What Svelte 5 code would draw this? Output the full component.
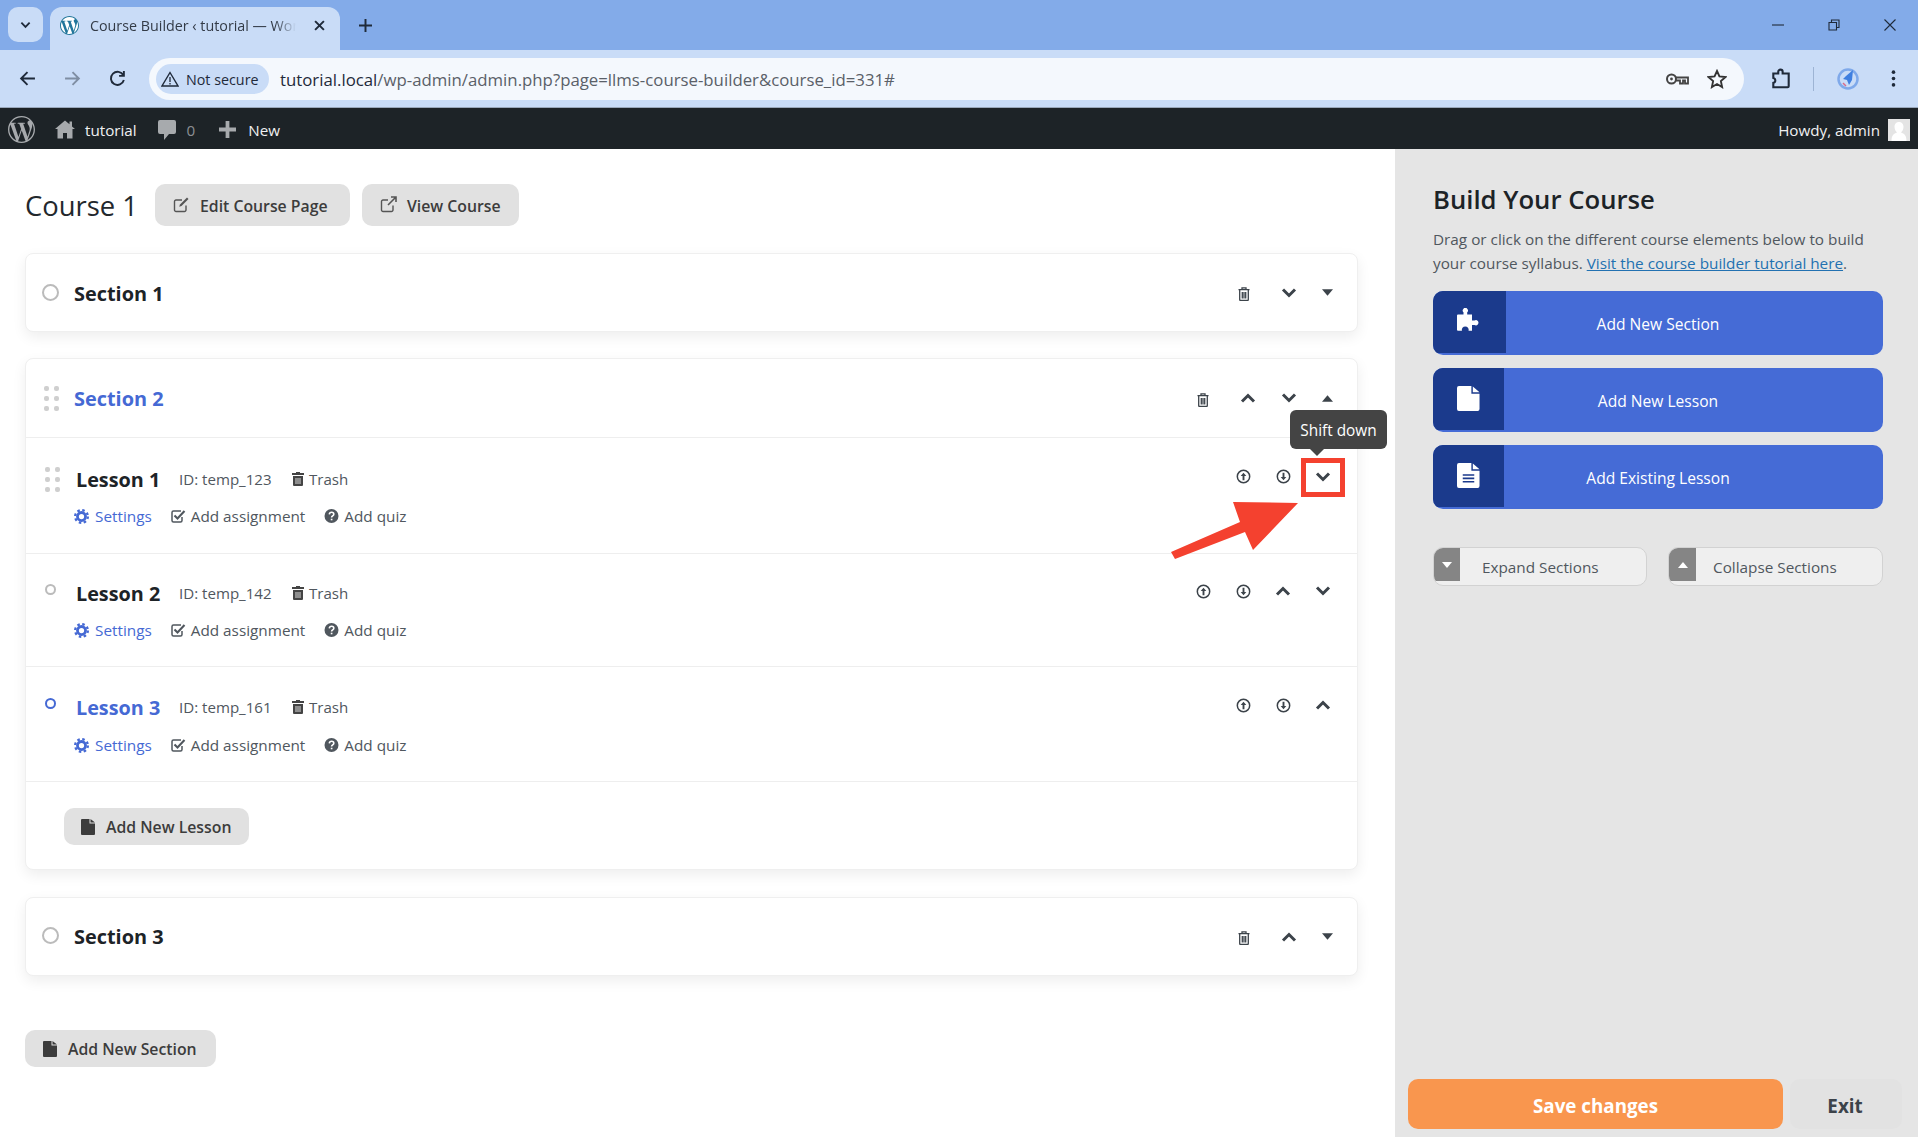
<script>
  const lessons = [
    { cls: 'l1', name: 'Lesson 1', id: 'temp_123', mark: 'drag', icons: ['cup', 'cdown', 'down'] },
    { cls: 'l2', name: 'Lesson 2', id: 'temp_142', mark: 'dot', icons: ['cup', 'cdown', 'up', 'down'] },
    { cls: 'l3', name: 'Lesson 3', id: 'temp_161', mark: 'blue', icons: ['cup', 'cdown', 'up'], active: true }
  ];
  const wp = 'M21.469 6.825c.84 1.537 1.318 3.3 1.318 5.175 0 3.979-2.156 7.456-5.363 9.325l3.295-9.527c.615-1.54.82-2.771.82-3.864 0-.405-.026-.78-.07-1.11m-7.981.105c.647-.03 1.232-.105 1.232-.105.582-.075.514-.93-.067-.899 0 0-1.755.135-2.88.135-1.064 0-2.85-.15-2.85-.15-.585-.03-.661.855-.075.885 0 0 .54.061 1.125.09l1.68 4.605-2.37 7.08L5.354 6.9c.649-.03 1.234-.1 1.234-.1.585-.075.516-.93-.065-.896 0 0-1.746.138-2.874.138-.2 0-.438-.008-.69-.015C4.911 3.15 8.235 1.215 12 1.215c2.809 0 5.365 1.072 7.286 2.833-.046-.003-.091-.009-.141-.009-1.06 0-1.812.923-1.812 1.914 0 .89.513 1.643 1.06 2.531.411.72.89 1.643.89 2.977 0 .915-.354 1.994-.821 3.479l-1.075 3.585-3.9-11.61.001.014zM12 22.784c-1.059 0-2.081-.153-3.048-.437l3.237-9.406 3.315 9.087c.024.053.05.101.078.149-1.12.393-2.325.609-3.582.609M1.211 12c0-1.564.336-3.05.935-4.39L7.29 21.709C3.694 19.96 1.212 16.271 1.211 12M12 0C5.385 0 0 5.385 0 12s5.385 12 12 12 12-5.385 12-12S18.615 0 12 0';
</script>

{#snippet chev(dir)}
  <svg class="chev" viewBox="0 0 16 10"><path d={dir === 'up' ? 'M2 8.5 8 2.5l6 6' : 'M2 1.5l6 6 6-6'} fill="none" stroke="#3c434a" stroke-width="3"/></svg>
{/snippet}
{#snippet caret(dir)}
  <svg class="caret" viewBox="0 0 10 6"><path d={dir === 'up' ? 'M0 6 5 0l5 6z' : 'M0 0l5 6 5-6z'} fill="#3c434a"/></svg>
{/snippet}
{#snippet trash()}
  <svg class="trash" viewBox="0 0 12 14"><path d="M4 2V.9h4V2M.5 2.6h11M1.7 3v9.6q0 .9.9.9h6.800q.9 0 .9-.9V3M4.300 5v6.500M6 5v6.500M7.700 5v6.500" fill="none" stroke="#3c434a" stroke-width="1.300"/></svg>
{/snippet}
{#snippet circ(dir)}
  <svg class="circ" viewBox="0 0 16 16"><circle cx="8" cy="8" r="6.600" fill="none" stroke="#3c434a" stroke-width="1.600"/><path d={dir === 'up' ? 'M8 4 5 7.500h2V12h2V7.500h2z' : 'M8 12 5 8.500h2V4h2v4.500h2z'} fill="#3c434a"/></svg>
{/snippet}
{#snippet file()}
  <svg class="file" viewBox="0 0 14 16"><path d="M1 0h7.500v4.500H14V15a1 1 0 0 1-1 1H1a1 1 0 0 1-1-1V1a1 1 0 0 1 1-1zM9.500 0 14 3.500H9.500z" fill="#3c3c3c"/></svg>
{/snippet}
{#snippet icon(n)}
  {#if n === 'cup'}{@render circ('up')}{:else if n === 'cdown'}{@render circ('down')}{:else}{@render chev(n)}{/if}
{/snippet}
{#snippet drag()}
  <span class="dots"><i></i><i></i><i></i><i></i><i></i><i></i></span>
{/snippet}

<div class="page">
  <div class="tabbar">
    <span class="tabmenu"><svg viewBox="0 0 12 8" width="11" height="8"><path d="M1.500 1.500 6 6l4.500-4.500" fill="none" stroke="#1f2a3a" stroke-width="2"/></svg></span>
    <div class="tab">
      <svg class="favicon" viewBox="0 0 24 24"><circle cx="12" cy="12" r="12" fill="#fff"/><path d={wp} fill="#21759b"/></svg>
      <span class="tabtitle">Course Builder ‹ tutorial — WordPress</span>
      <svg class="tabx" viewBox="0 0 10 10"><path d="M1 1l8 8M9 1 1 9" stroke="#1f2a3a" stroke-width="1.800"/></svg>
    </div>
    <svg class="newtab" viewBox="0 0 12 12"><path d="M6 0v12M0 6h12" stroke="#1f2a3a" stroke-width="1.800"/></svg>
    <div class="winctl">
      <svg viewBox="0 0 12 12"><path d="M0 6h12" stroke="#1f2a3a" stroke-width="1.100"/></svg>
      <svg viewBox="0 0 12 12"><path d="M1 3.500h7.500V11H1zM3.500 3.500V1H11v7.500H8.500" fill="none" stroke="#1f2a3a" stroke-width="1.100"/></svg>
      <svg viewBox="0 0 12 12"><path d="M.5.500l11 11M11.500.500l-11 11" stroke="#1f2a3a" stroke-width="1.100"/></svg>
    </div>
  </div>

  <div class="toolbar">
    <svg class="navi first" viewBox="0 0 16 16"><path d="M15 8H2M8 2 2 8l6 6" fill="none" stroke="#1f2a3a" stroke-width="1.800"/></svg>
    <svg class="navi" viewBox="0 0 16 16"><path d="M1 8h13M8 2l6 6-6 6" fill="none" stroke="#7f8ea3" stroke-width="1.800"/></svg>
    <svg class="navi" viewBox="0 0 16 16"><path d="M13.500 5A6.200 6.200 0 1 0 14 9.500M14 1v4.500H9.500" fill="none" stroke="#1f2a3a" stroke-width="1.800"/></svg>
    <div class="omni">
      <span class="chip">
        <svg viewBox="0 0 18 16" width="18" height="16"><path d="M9 1.500 17 15H1z" fill="none" stroke="#1f2a3a" stroke-width="1.400"/><path d="M9 6v5M9 12v1.500" stroke="#1f2a3a" stroke-width="1.300"/></svg>
        Not secure
      </span>
      <span class="url"><b>tutorial.local</b>/wp-admin/admin.php?page=llms-course-builder&amp;course_id=331#</span>
      <svg class="key" viewBox="0 0 24 14"><circle cx="6.500" cy="7" r="4.500" fill="none" stroke="#444" stroke-width="2"/><circle cx="6.500" cy="7" r="1.400" fill="#444"/><path d="M11 5.500h12v6h-3v-3h-2v3h-3v-3h-4" fill="none" stroke="#444" stroke-width="1.800"/></svg>
      <svg class="star" viewBox="0 0 18 18"><path d="M9 1.800l2.200 4.900 5.300.6-4 3.600 1.100 5.300L9 13.500l-4.600 2.700 1.100-5.300-4-3.600 5.300-.6z" fill="none" stroke="#333" stroke-width="1.700"/></svg>
    </div>
    <svg class="ext" viewBox="0 0 18 20"><path d="M2 4h4.500V2.500a2 2 0 0 1 4 0V4H16v11.500a1 1 0 0 1-1 1H2v-4a2.300 2.300 0 0 0 0-4.500z" fill="none" stroke="#1f2a3a" stroke-width="1.900" transform="translate(0 1)"/></svg>
    <span class="sep"></span>
    <svg class="profile" viewBox="0 0 22 22"><circle cx="11" cy="11" r="9.500" fill="none" stroke="#7fa9ea" stroke-width="2.500"/><path d="M16 2 9 8l-3 3 4 1 2 5 3-5z" fill="#3f7fe0"/><path d="M6 15l3 3" stroke="#d86b8a" stroke-width="1.500"/></svg>
    <svg class="kebab" viewBox="0 0 4 16"><circle cx="2" cy="2" r="1.700" fill="#1f2a3a"/><circle cx="2" cy="8" r="1.700" fill="#1f2a3a"/><circle cx="2" cy="14" r="1.700" fill="#1f2a3a"/></svg>
  </div>

  <div class="adminbar">
    <svg class="ab-logo" viewBox="0 0 24 24"><path d={wp} fill="#a7aaad"/></svg>
    <svg class="ab-home" viewBox="0 0 20 18"><path d="M10 0 0 8.500h2.500V18H8v-5.500h4V18h5.500V8.500H20l-3-2.600V1h-2.500v2.800z" fill="#a7aaad"/></svg>
    <span class="ab-site">tutorial</span>
    <svg class="ab-bubble" viewBox="0 0 18 20"><path d="M2 0h14a2 2 0 0 1 2 2v10a2 2 0 0 1-2 2h-5l-5 6v-6H2a2 2 0 0 1-2-2V2a2 2 0 0 1 2-2z" fill="#a7aaad"/></svg>
    <span class="ab-count">0</span>
    <svg class="ab-plus" viewBox="0 0 18 18"><path d="M7 0h4v7h7v4h-7v7H7v-7H0V7h7z" fill="#a7aaad"/></svg>
    <span class="ab-new">New</span>
    <span class="ab-howdy">Howdy, admin</span>
    <svg class="ab-avatar" viewBox="0 0 22 22"><rect width="22" height="22" fill="#e4e4e4"/><path d="M11 3c3 0 4.500 2.300 4.500 5s-1.500 4.500-2.500 5.500c3 1 5.500 2.500 5.500 8.500H3.500c0-6 2.500-7.500 5.500-8.500C8 12.500 6.500 10.700 6.500 8s1.500-5 4.500-5z" fill="#fff"/></svg>
  </div>

  <div class="main">
    <div class="left">
      <div class="head">
        <h1>Course 1</h1>
        <span class="gbtn edit">
          <svg class="hicon" viewBox="0 0 17 17"><path d="M13 9.500V14a1.500 1.500 0 0 1-1.500 1.500H3A1.500 1.500 0 0 1 1.500 14V5.500A1.500 1.500 0 0 1 3 4h6" fill="none" stroke="#555" stroke-width="1.400"/><path d="M14 1.500l1.500 1.500-7 7-2.300.8.800-2.300z" fill="#555"/></svg>
          Edit Course Page
        </span>
        <span class="gbtn view">
          <svg class="hicon" viewBox="0 0 17 17"><path d="M13 9.500V14a1.500 1.500 0 0 1-1.500 1.500H3A1.500 1.500 0 0 1 1.500 14V5.500A1.500 1.500 0 0 1 3 4h5" fill="none" stroke="#555" stroke-width="1.400"/><path d="M11 1h5v5M16 1 8 9" fill="none" stroke="#555" stroke-width="1.600"/></svg>
          View Course
        </span>
      </div>

      <section class="card">
        <div class="shead s1">
          <span class="handle"><span class="radio"></span></span>
          <h2>Section 1</h2>
          <div class="acts">
            {@render trash()}
            <span class="slot m22">{@render chev('down')}</span>
            <span class="slot m14">{@render caret('down')}</span>
          </div>
        </div>
      </section>

      <section class="card open">
        <div class="shead line">
          <span class="handle">{@render drag()}</span>
          <h2 class="blue">Section 2</h2>
          <div class="acts">
            {@render trash()}
            <span class="slot m22">{@render chev('up')}</span>
            <span class="slot m17">{@render chev('down')}</span>
            <span class="slot m14">{@render caret('up')}</span>
          </div>
        </div>
        {#each lessons as l}
          <div class="lesson {l.cls}">
            <div class="lrow">
              <span class="lhandle">
                {#if l.mark === 'drag'}{@render drag()}{:else}<span class="mini" class:bluering={l.mark === 'blue'}></span>{/if}
              </span>
              <h3 class:blue={l.active}>{l.name}</h3>
              <span class="meta id">ID: {l.id}</span>
              <span class="meta tr"><svg class="mtrash" viewBox="0 0 12 14"><path d="M4 1V0h4v1h4v2H0V1zM1 4h10v9a1 1 0 0 1-1 1H2a1 1 0 0 1-1-1z" fill="#444"/><path d="M4 6v6M6 6v6M8 6v6" stroke="#fff" stroke-width=".8"/></svg>Trash</span>
              <div class="lacts">
                {#each l.icons as ic, i}
                  <span class="lslot">{@render icon(ic)}</span>
                {/each}
              </div>
            </div>
            <div class="lsub">
              <span class="link setting"><svg class="gear" viewBox="0 0 16 16"><circle cx="8" cy="8" r="4.300" fill="none" stroke="#4569d4" stroke-width="3"/><circle cx="8" cy="8" r="6.800" fill="none" stroke="#4569d4" stroke-width="2.400" stroke-dasharray="2.670 2.670"/></svg>Settings</span>
              <span class="link"><svg class="sub" viewBox="0 0 15 14"><path d="M11 8v3.500A1.500 1.500 0 0 1 9.500 13h-7A1.500 1.500 0 0 1 1 11.500v-8A1.500 1.500 0 0 1 2.500 2H10" fill="none" stroke="#50575e" stroke-width="1.500"/><path d="M3.500 6.500 6.500 9.500l7-7.500" fill="none" stroke="#50575e" stroke-width="2.100"/></svg>Add assignment</span>
              <span class="link"><svg class="sub" viewBox="0 0 14 14"><circle cx="7" cy="7" r="7" fill="#50575e"/><path d="M4.800 5.300C5 3.900 6 3.300 7.100 3.300c1.300 0 2.200.8 2.200 1.900 0 1.700-2.200 1.700-2.200 3.300" fill="none" stroke="#fff" stroke-width="1.600"/><path d="M7.100 9.700v1.600" stroke="#fff" stroke-width="1.700"/></svg>Add quiz</span>
            </div>
          </div>
        {/each}
        <div class="sfoot">
          <span class="gbtn small lessonbtn">{@render file()}Add New Lesson</span>
        </div>
      </section>

      <section class="card">
        <div class="shead">
          <span class="handle"><span class="radio"></span></span>
          <h2>Section 3</h2>
          <div class="acts">
            {@render trash()}
            <span class="slot m22">{@render chev('up')}</span>
            <span class="slot m14">{@render caret('down')}</span>
          </div>
        </div>
      </section>

      <span class="gbtn small addsec">{@render file()}Add New Section</span>
    </div>

    <aside class="right">
      <h2 class="build">Build Your Course</h2>
      <p class="desc">Drag or click on the different course elements below to build your course syllabus. <a href="#top">Visit the course builder tutorial here</a>.</p>

      <div class="blue-btn first">
        <span class="bicon wide"><svg viewBox="0 0 24 23" width="24" height="23"><path d="M1 6.500H6.500V4.300a2.600 2.600 0 1 1 3.700 0V6.500H15V12.500h2.500a2.600 2.600 0 1 1 0 4.500H15V22.800H11.500a3.400 3.400 0 1 0-6.500 0H1a1 1 0 0 1-1-1V7.500a1 1 0 0 1 1-1z" fill="#fff"/></svg></span>
        <span class="btext">Add New Section</span>
      </div>
      <div class="blue-btn">
        <span class="bicon"><svg viewBox="0 0 24 26" width="23" height="25"><path d="M2 0h13v8h8.500v16a2 2 0 0 1-2 2H2a2 2 0 0 1-2-2V2a2 2 0 0 1 2-2zM16.500.5l7 6h-7z" fill="#fff"/></svg></span>
        <span class="btext">Add New Lesson</span>
      </div>
      <div class="blue-btn">
        <span class="bicon"><svg viewBox="0 0 24 26" width="23" height="25"><path d="M2 0h13v8h8.500v16a2 2 0 0 1-2 2H2a2 2 0 0 1-2-2V2a2 2 0 0 1 2-2zM16.500.5l7 6h-7z" fill="#fff"/><path d="M6 12.500h12M6 16h12M6 19.500h12" stroke="#1b3a8c" stroke-width="1.600"/></svg></span>
        <span class="btext">Add Existing Lesson</span>
      </div>

      <div class="toggles">
        <div class="toggle">
          <span class="tbox"><svg viewBox="0 0 10 6" width="10" height="6"><path d="M0 0l5 6 5-6z" fill="#fff"/></svg></span>
          <span class="ttext">Expand Sections</span>
        </div>
        <div class="toggle col">
          <span class="tbox"><svg viewBox="0 0 10 6" width="10" height="6"><path d="M0 6l5-6 5 6z" fill="#fff"/></svg></span>
          <span class="ttext">Collapse Sections</span>
        </div>
      </div>

      <div class="savebar">
        <span class="save">Save changes</span>
        <span class="exit">Exit</span>
      </div>
    </aside>
  </div>

  <div class="tip">Shift down</div>
  <div class="redbox"></div>
  <svg class="arrow" viewBox="0 0 1918 1137"><polygon points="1171,552 1240,522 1233,502 1298,503 1253,550 1245,532 1175,559" fill="#f4412f"/></svg>
</div>

<style>
  :global(body) { margin: 0; background: #fff; }
  .page { position: relative; width: 1918px; height: 1137px; overflow: hidden; display: flex; flex-direction: column; font-family: "Open Sans", "Noto Sans", sans-serif; color: #3c434a; }
  svg { display: block; flex: none; }

  .tabbar { height: 50px; background: #83abe9; display: flex; align-items: flex-end; flex: none; }
  .tabmenu { width: 35px; height: 35px; margin: 0 7px 8px 8px; border-radius: 10px; background: #c9dcf7; display: flex; align-items: center; justify-content: center; }
  .tab { width: 290px; height: 43px; border-radius: 12px 12px 0 0; background: #c9dcf7; display: flex; align-items: center; box-sizing: border-box; padding: 0 15px 7px 10px; }
  .favicon { width: 19px; height: 19px; margin-right: 11px; }
  .tabtitle { width: 207px; overflow: hidden; white-space: nowrap; font-size: 14.300px; color: #333b47; -webkit-mask-image: linear-gradient(to right, #000 90%, transparent); mask-image: linear-gradient(to right, #000 90%, transparent); }
  .tabx { width: 11px; height: 11px; margin-left: 18px; }
  .newtab { width: 13px; height: 13px; margin: 0 0 18px 19px; }
  .winctl { margin-left: auto; display: flex; gap: 44px; padding: 0 22px 19px 0; }
  .winctl svg { width: 12px; height: 12px; }

  .toolbar { height: 58px; background: #c9dcf7; display: flex; align-items: center; flex: none; border-bottom: 1px solid #9aa8bb; box-sizing: border-box; }
  .navi { width: 17px; height: 17px; margin-left: 28px; }
  .navi.first { margin-left: 19px; }
  .omni { width: 1595px; height: 42px; margin-left: 23px; border-radius: 21px; background: #f4f8fd; display: flex; align-items: center; box-sizing: border-box; padding-left: 7px; margin-top: 1px; }
  .chip { height: 30px; width: 113px; box-sizing: border-box; padding-left: 5px; border-radius: 15px; background: #c9dcf7; display: flex; align-items: center; gap: 7px; font-size: 14.300px; color: #1f2a3a; white-space: nowrap; }
  .url { margin-left: 11px; font-size: 16.800px; color: #5a6068; white-space: nowrap; }
  .url b { font-weight: 400; color: #1f2a3a; }
  .key { width: 24px; height: 14px; margin-left: auto; }
  .star { width: 20px; height: 20px; margin: 0 17px 0 18px; }
  .ext { width: 20px; height: 22px; margin-left: 27px; }
  .sep { width: 1px; height: 24px; background: #9db4d4; margin-left: 22px; }
  .profile { width: 22px; height: 22px; margin-left: 23px; }
  .kebab { width: 5px; height: 17px; margin-left: 32px; }

  .adminbar { height: 41px; background: #1d2327; color: #f0f0f1; display: flex; align-items: center; flex: none; font-size: 15.200px; box-sizing: border-box; padding-top: 2px; }
  .ab-logo { width: 27px; height: 27px; margin-left: 8px; }
  .ab-home { width: 20px; height: 19px; margin-left: 20px; }
  .ab-site { margin-left: 10px; }
  .ab-bubble { width: 18px; height: 20px; margin-left: 21px; }
  .ab-count { margin-left: 11px; color: #8c8f94; }
  .ab-plus { width: 17px; height: 17px; margin-left: 24px; }
  .ab-new { margin-left: 12px; }
  .ab-howdy { margin-left: auto; }
  .ab-avatar { width: 22px; height: 22px; margin: 0 8px 0 8px; }

  .main { flex: 1; display: flex; min-height: 0; }
  .left { width: 1395px; flex: none; box-sizing: border-box; padding: 35px 37px 0 25px; }
  .head { display: flex; align-items: center; height: 42px; margin-bottom: 27px; }
  h1 { margin: 0 20px 0 0; font-size: 27.400px; font-weight: 400; color: #23282d; width: 110px; white-space: nowrap; }
  .gbtn { display: flex; align-items: center; background: #e1e1e1; border-radius: 10px; font-weight: 600; color: #3c3c3c; box-sizing: border-box; white-space: nowrap; }
  .edit { width: 195px; height: 42px; padding: 2px 0 0 18px; font-size: 15.800px; }
  .view { width: 157px; height: 42px; padding: 2px 0 0 18px; font-size: 15.800px; margin-left: 12px; }
  .hicon { width: 17px; height: 17px; margin-right: 10px; margin-top: -4px; }
  .small { height: 37px; font-size: 15.800px; }
  .file { width: 14px; height: 16px; margin-right: 11px; }
  .lessonbtn { width: 185px; padding-left: 17px; }
  .addsec { width: 191px; padding-left: 18px; margin-top: 54px; }

  .card { background: #fff; border: 1px solid #efefef; border-radius: 8px; box-shadow: 0 5px 14px rgba(0, 0, 0, 0.07); box-sizing: border-box; margin-bottom: 26px; }
  .card.open { margin-bottom: 27px; }
  .shead { height: 77px; display: flex; align-items: center; box-sizing: border-box; }
  .shead.s1 { padding-top: 2px; }
  .shead.line { height: 79px; border-bottom: 1px solid #eeeeee; }
  .handle { width: 47px; display: flex; justify-content: flex-start; padding-left: 16px; box-sizing: border-box; }
  .radio { width: 17px; height: 17px; box-sizing: border-box; border-radius: 50%; border: 2px solid #bbb; margin-top: -2px; }
  h2 { margin: 0 0 0 1px; font-size: 19.900px; font-weight: 700; color: #1d2327; white-space: nowrap; }
  h2.blue, h3.blue { color: #4569d4; }
  .dots { display: grid; grid-template-columns: 5px 5px; gap: 5px; }
  .dots i { width: 5px; height: 5px; border-radius: 2px; background: #cfcfcf; }
  .handle .dots { margin-left: 2px; }
  .acts { margin-left: auto; display: flex; align-items: center; padding-right: 18px; }
  .s1 .acts { margin-top: -2px; }
  .slot { width: 24px; display: flex; justify-content: center; }
  .m22 { margin-left: 22px; }
  .m17 { margin-left: 17px; }
  .m14 { margin-left: 14px; }
  .acts > .trash { margin-right: 5px; margin-top: 3px; }
  .chev { width: 16px; height: 10px; }
  .caret { width: 11px; height: 7px; }
  .trash { width: 12px; height: 14px; }
  .circ { width: 15px; height: 15px; }
  .l1 .circ { margin-top: -2px; }

  .lesson { box-sizing: border-box; border-bottom: 1px solid #eeeeee; }
  .l1 { height: 116px; padding-top: 26px; }
  .l2 { height: 113px; padding-top: 24px; }
  .l3 { height: 115px; padding-top: 25px; }
  .lrow { display: flex; align-items: center; height: 30px; }
  .lhandle { width: 50px; box-sizing: border-box; padding-left: 19px; display: flex; }
  .mini { width: 11px; height: 11px; box-sizing: border-box; border: 2px solid #bbb; border-radius: 50%; margin-top: -7px; margin-left: 0; }
  .bluering { border-color: #4569d4; }
  h3 { margin: 0; font-size: 19.800px; font-weight: 700; color: #1d2327; white-space: nowrap; width: 103px; }
  .meta { font-size: 15.100px; color: #50575e; white-space: nowrap; }
  .id { width: 113px; }
  .tr { display: flex; align-items: center; }
  .mtrash { width: 12px; height: 14px; margin-right: 5px; }
  .lacts { margin-left: auto; display: flex; align-items: center; padding-right: 22px; gap: 16px; margin-top: -4px; }
  .lslot { width: 24px; display: flex; justify-content: center; }
  .lsub { display: flex; align-items: center; padding-left: 48px; margin-top: 7px; height: 30px; }
  .l3 .lsub { margin-top: 8px; }
  .link { display: flex; align-items: center; font-size: 15.300px; color: #50575e; white-space: nowrap; margin-right: 19px; }
  .setting { color: #4569d4; }
  .gear { width: 15px; height: 15px; margin-right: 6px; }
  .sub { width: 15px; height: 14px; margin-right: 5px; }
  .sfoot { height: 87px; box-sizing: border-box; padding: 26px 0 0 38px; }

  .right { width: 523px; background: #e5e5e5; box-sizing: border-box; padding: 0 35px 0 38px; position: relative; display: flex; flex-direction: column; }
  .build { font-size: 25.700px; font-weight: 600; color: #1d2327; margin: 34px 0 0; line-height: 34px; }
  .desc { margin: 10px 0 16px; font-size: 15.300px; line-height: 24px; color: #50575e; }
  .desc a { color: #2271b1; text-decoration: underline; }
  .blue-btn { height: 64px; margin-bottom: 13px; border-radius: 10px; background: #456bd6; position: relative; overflow: hidden; display: flex; align-items: center; justify-content: center; color: #fff; font-size: 15.600px; box-sizing: border-box; padding-top: 2px; }
  .bicon { position: absolute; left: 0; top: 0; bottom: 2px; width: 71px; background: #1b3a8c; display: flex; align-items: center; padding: 0 0 2px 24px; box-sizing: border-box; }
  .bicon.wide { width: 73px; padding-bottom: 6px; }
  .toggles { display: flex; justify-content: space-between; margin-top: 25px; }
  .toggle { width: 214px; height: 39px; box-sizing: border-box; border: 1px solid #d2d2d2; border-radius: 10px; background: #efefef; display: flex; overflow: hidden; font-size: 15.300px; color: #50575e; }
  .toggle.col { width: 215px; }
  .tbox { width: 26px; height: 33px; background: #858585; display: flex; align-items: center; justify-content: center; }
  .col .tbox { width: 27px; }
  .ttext { margin-left: 22px; line-height: 39px; }
  .col .ttext { margin-left: 17px; }
  .savebar { margin: auto -19px 8px -25px; display: flex; gap: 7px; }
  .save { width: 375px; height: 50px; background: #f9964e; border-radius: 10px; color: #fff; font-weight: 700; font-size: 18.800px; display: flex; align-items: center; justify-content: center; box-sizing: border-box; padding-top: 3px; }
  .exit { width: 112px; height: 50px; background: #e2e2e2; border-radius: 10px; color: #3c434a; font-weight: 700; font-size: 18.800px; display: flex; align-items: center; justify-content: center; box-sizing: border-box; padding: 3px 2px 0 0; }

  .tip { position: absolute; left: 1290px; top: 410px; width: 97px; height: 39px; background: #444; border-radius: 6px; color: #fff; font-size: 15.400px; display: flex; align-items: center; justify-content: center; box-sizing: border-box; padding-top: 2px; }
  .tip::after { content: ""; position: absolute; left: 20px; top: 39px; border: 7px solid transparent; border-top-color: #444; border-bottom: 0; }
  .redbox { position: absolute; left: 1301px; top: 458px; width: 44px; height: 39px; box-sizing: border-box; border: 5px solid #f4412f; }
  .arrow { position: absolute; left: 0; top: 0; width: 1918px; height: 1137px; pointer-events: none; }
</style>
